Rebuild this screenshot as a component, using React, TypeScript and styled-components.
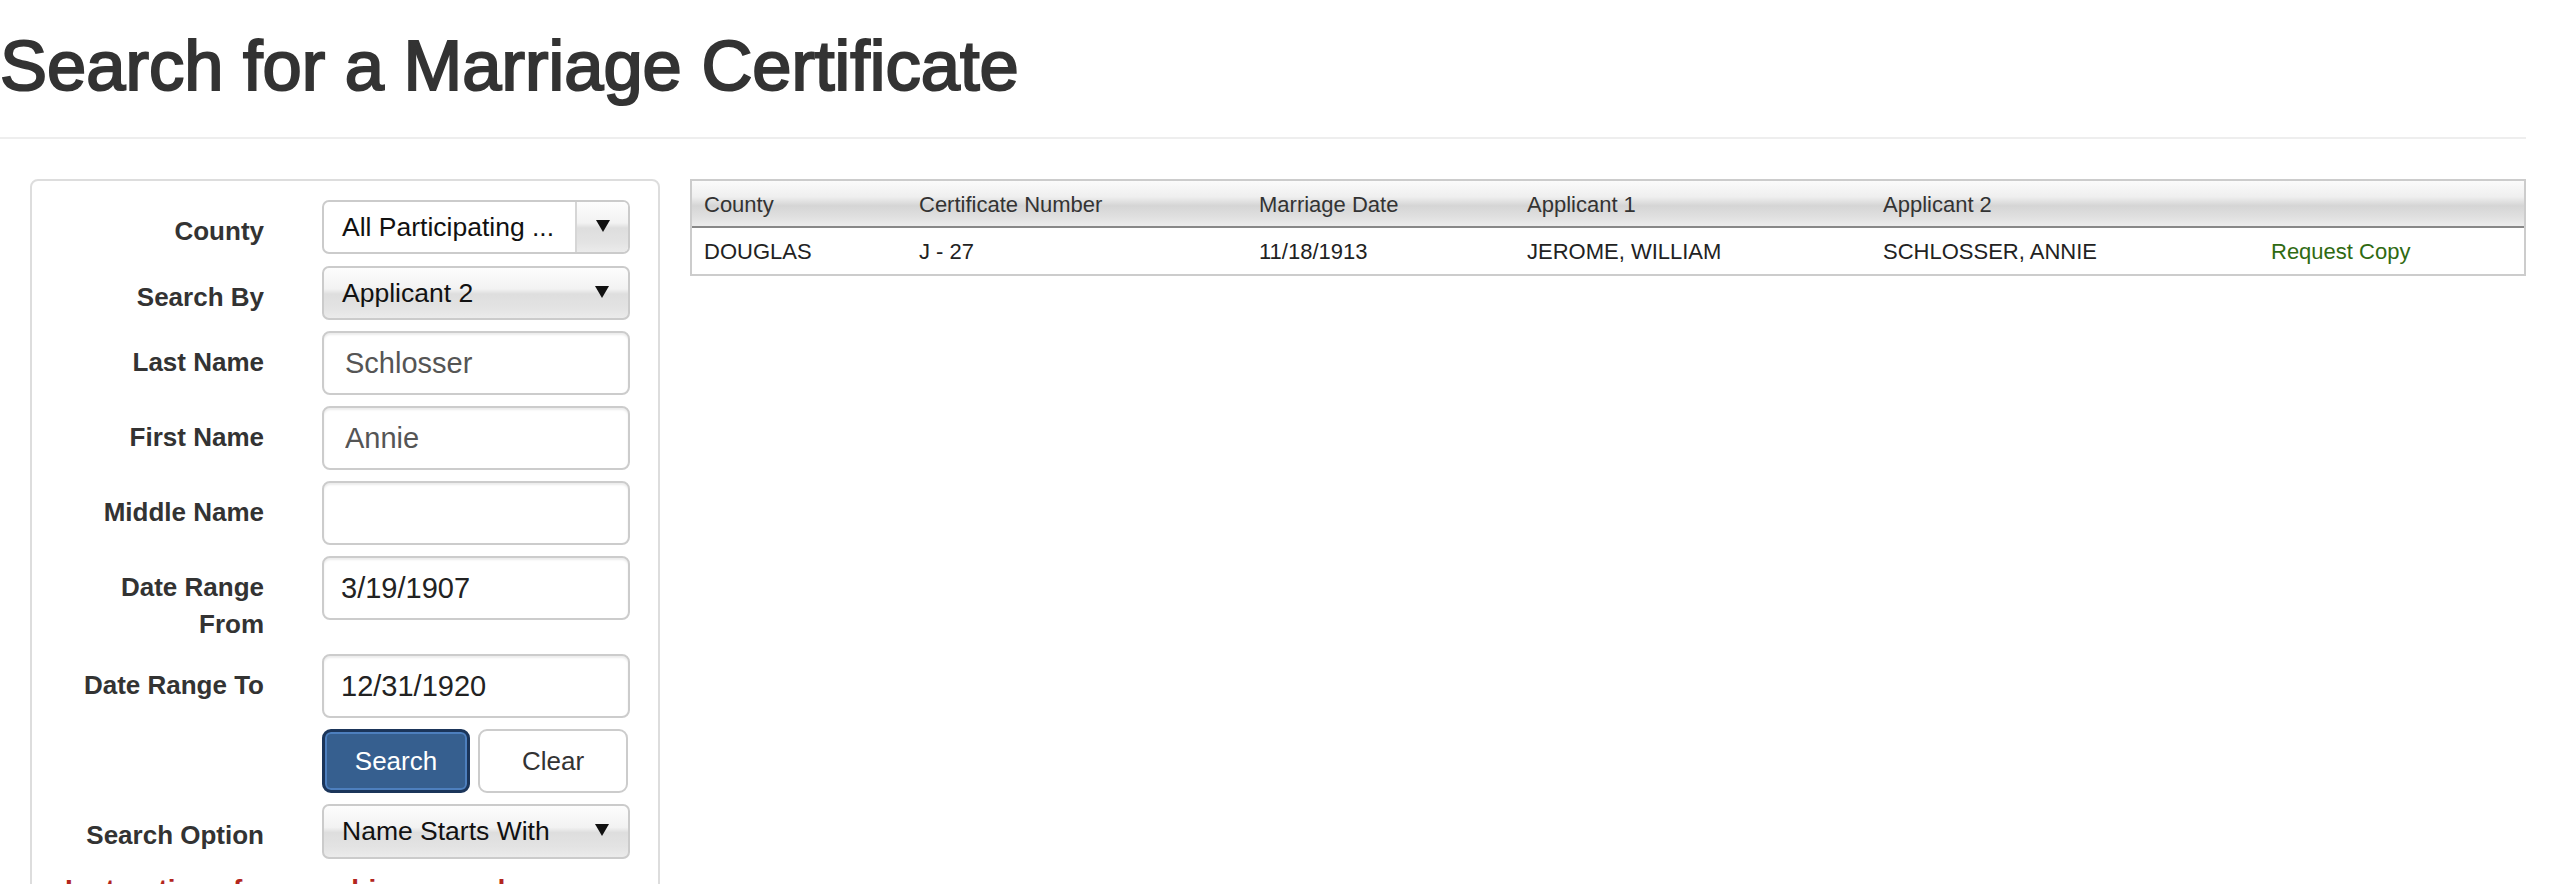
import React from "react";
import styled, { createGlobalStyle } from "styled-components";

const GlobalStyle = createGlobalStyle`
  *, *::before, *::after { box-sizing: border-box; }
  html, body { margin: 0; padding: 0; overflow: hidden; background: #fff; }
  body { font-family: "Liberation Sans", Arial, Helvetica, sans-serif; color: #333; }
`;

const glossy = `linear-gradient(to bottom, #fdfdfd 0%, #f2f2f2 42%, #dedede 52%, #e3e3e3 80%, #ebebeb 100%)`;

const Page = styled.div`
  padding-right: 34px;
`;

const Header = styled.header`
  padding-bottom: 33px;
  border-bottom: 2px solid #eee;
`;

const Title = styled.h1`
  margin: 27px 0 0;
  font-size: 70.5px;
  line-height: 77px;
  font-weight: 400;
  color: #333;
  -webkit-text-stroke: 2.1px #333;
`;

const Content = styled.div`
  display: flex;
  align-items: flex-start;
  gap: 30px;
  margin-top: 40px;
  padding-left: 30px;
`;

const Panel = styled.form`
  flex: 0 0 630px;
  border: 2px solid #ddd;
  border-radius: 8px;
  padding: 19px 28px 60px 0;
`;

const Row = styled.div<{ $gap?: number }>`
  display: grid;
  grid-template-columns: 232px 308px;
  column-gap: 58px;
  align-items: start;
  margin-bottom: ${(p) => p.$gap ?? 11}px;
`;

const Label = styled.label`
  text-align: right;
  font-weight: 700;
  font-size: 26px;
  line-height: 37px;
  padding: 13px 0 0 32px;
  color: #333;
`;

const TextInput = styled.input<{ $dark?: boolean }>`
  width: 100%;
  height: 64px;
  margin: 0;
  border: 2px solid #ccc;
  border-radius: 8px;
  padding: 0 0 0 ${(p) => (p.$dark ? 17 : 21)}px;
  font-family: "Liberation Sans", Arial, sans-serif;
  font-size: 29px;
  color: ${(p) => (p.$dark ? "#222" : "#555")};
  background: #fff;
  box-shadow: inset 0 2px 2px rgba(0, 0, 0, 0.075);
  outline: none;
`;

const SelectBox = styled.div<{ $plain?: boolean; $h?: number }>`
  display: flex;
  align-items: stretch;
  height: ${(p) => p.$h ?? 54}px;
  border: 2px solid #cbcbcb;
  border-radius: 7px;
  overflow: hidden;
  background: ${(p) => (p.$plain ? "#fff" : glossy)};
  font-size: 26.5px;
  color: #111;
`;

const SelectValue = styled.span`
  flex: 1;
  display: flex;
  align-items: center;
  padding-left: 18px;
  white-space: nowrap;
  overflow: hidden;
`;

const SelectArrow = styled.span<{ $separated?: boolean }>`
  flex: 0 0 53px;
  display: flex;
  align-items: center;
  justify-content: center;
  padding-bottom: 3px;
  border-left: ${(p) => (p.$separated ? "2px solid #d6d6d6" : "none")};
  background: ${(p) => (p.$separated ? glossy : "transparent")};
  &::after {
    content: "";
    border-left: 7px solid transparent;
    border-right: 7px solid transparent;
    border-top: 12px solid #111;
  }
`;

const ButtonGroup = styled.div`
  display: flex;
  gap: 8px;
`;

const Button = styled.button<{ $primary?: boolean }>`
  height: 64px;
  width: ${(p) => (p.$primary ? 148 : 150)}px;
  margin: 0;
  font-family: "Liberation Sans", Arial, sans-serif;
  font-size: 26px;
  border-radius: 9px;
  cursor: pointer;
  color: ${(p) => (p.$primary ? "#fff" : "#333")};
  background: ${(p) => (p.$primary ? "#365f8f" : "#fff")};
  border: ${(p) => (p.$primary ? "3px solid #1b355a" : "2px solid #ccc")};
  box-shadow: ${(p) => (p.$primary ? "inset 0 0 0 2px #4d7fbe" : "none")};
`;

const Note = styled.p`
  margin: 10px 0 0 33px;
  color: #b3261e;
  font-weight: 700;
  font-size: 28px;
  line-height: 40px;
`;

const ResultsTable = styled.table`
  flex: 1 1 auto;
  border-collapse: separate;
  border-spacing: 0;
  table-layout: fixed;
  border: 2px solid #ccc;
  font-size: 22px;
`;

const Col = styled.col<{ $w?: number }>`
  width: ${(p) => (p.$w ? `${p.$w}px` : "auto")};
`;

const Th = styled.th`
  height: 47px;
  padding: 2px 0 0 12px;
  text-align: left;
  font-weight: 400;
  color: #333;
  white-space: nowrap;
  background: linear-gradient(to bottom, #fbfbfb 0%, #efefef 35%, #d5d5d5 55%, #e0e0e0 80%, #ececec 100%);
  border-bottom: 2px solid #888;
`;

const Td = styled.td`
  height: 46px;
  padding: 2px 0 0 12px;
  color: #222;
  white-space: nowrap;
`;

const RequestLink = styled.a`
  color: #2f6a12;
  text-decoration: none;
`;

const columns = [
  { title: "County", w: 215 },
  { title: "Certificate Number", w: 340 },
  { title: "Marriage Date", w: 268 },
  { title: "Applicant 1", w: 356 },
  { title: "Applicant 2", w: 388 },
  { title: "", w: 0 },
];

const results = [
  {
    county: "DOUGLAS",
    cert: "J - 27",
    date: "11/18/1913",
    app1: "JEROME, WILLIAM",
    app2: "SCHLOSSER, ANNIE",
  },
];

export default function App() {
  return (
    <Page>
      <GlobalStyle />
      <Header>
        <Title>Search for a Marriage Certificate</Title>
      </Header>
      <Content>
        <Panel onSubmit={(e) => e.preventDefault()}>
          <Row $gap={12}>
            <Label>County</Label>
            <SelectBox $plain>
              <SelectValue>All Participating ...</SelectValue>
              <SelectArrow $separated />
            </SelectBox>
          </Row>
          <Row>
            <Label>Search By</Label>
            <SelectBox>
              <SelectValue>Applicant 2</SelectValue>
              <SelectArrow />
            </SelectBox>
          </Row>
          <Row>
            <Label>Last Name</Label>
            <TextInput defaultValue="Schlosser" />
          </Row>
          <Row>
            <Label>First Name</Label>
            <TextInput defaultValue="Annie" />
          </Row>
          <Row>
            <Label>Middle Name</Label>
            <TextInput defaultValue="" />
          </Row>
          <Row>
            <Label>Date Range From</Label>
            <TextInput $dark defaultValue="3/19/1907" />
          </Row>
          <Row>
            <Label>Date Range To</Label>
            <TextInput $dark defaultValue="12/31/1920" />
          </Row>
          <Row>
            <span />
            <ButtonGroup>
              <Button $primary type="submit">Search</Button>
              <Button type="button">Clear</Button>
            </ButtonGroup>
          </Row>
          <Row>
            <Label>Search Option</Label>
            <SelectBox $h={55}>
              <SelectValue>Name Starts With</SelectValue>
              <SelectArrow />
            </SelectBox>
          </Row>
          <Note>Instructions for searching records</Note>
        </Panel>
        <ResultsTable>
          <colgroup>
            {columns.map((c, i) => (
              <Col key={i} $w={c.w || undefined} />
            ))}
          </colgroup>
          <thead>
            <tr>
              {columns.map((c, i) => (
                <Th key={i}>{c.title}</Th>
              ))}
            </tr>
          </thead>
          <tbody>
            {results.map((r, i) => (
              <tr key={i}>
                <Td>{r.county}</Td>
                <Td>{r.cert}</Td>
                <Td>{r.date}</Td>
                <Td>{r.app1}</Td>
                <Td>{r.app2}</Td>
                <Td>
                  <RequestLink href="#">Request Copy</RequestLink>
                </Td>
              </tr>
            ))}
          </tbody>
        </ResultsTable>
      </Content>
    </Page>
  );
}
